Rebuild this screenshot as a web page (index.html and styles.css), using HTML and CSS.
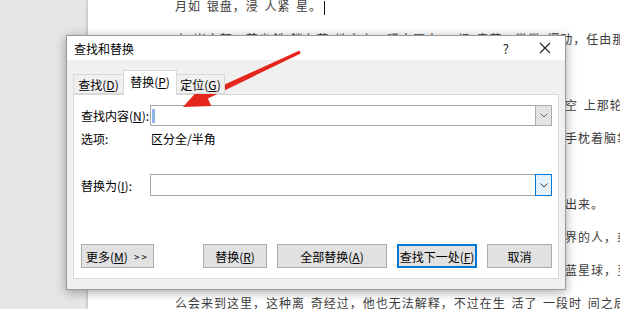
FILE: index.html
```html
<!DOCTYPE html>
<html lang="zh-CN">
<head>
<meta charset="utf-8">
<title>查找和替换</title>
<link rel="stylesheet" href="styles.css">
</head>
<body>
<div class="app">
  <div class="gutter"></div>
  <div class="page">
    <div class="doc">
      <div class="line">月如 银盘，浸 人紧 星。<span class="cursor"></span></div>
      <div class="line">山 岗之颠，萧尘斜 躺在草 地之上，嘴中叼中一 根 青草，微微 摆动，任由那</div>
      <div class="line"></div>
      <div class="line">他静静地望着头顶那浩瀚无垠的璀璨星河，目光最后缓缓停留在了夜空 上那轮明月</div>
      <div class="line">思绪翻涌之间，他不由得轻轻叹了一口气，随后便缓缓地平躺下，双手枕着脑袋</div>
      <div class="line"></div>
      <div class="line">那些深深埋藏在心底最深处的久远记忆，此刻又再一点一点地浮现了出来。</div>
      <div class="line">他原本其实不是这个世界之中土生土长的人，而是来自于另外一个世界的人，或</div>
      <div class="line">者说他原本一直生活在一颗名为地球的星球之上，那是一颗美丽的蔚蓝星球，至</div>
      <div class="line">么会来到这里，这种离 奇经过，他也无法解释，不过在生 活了 一段时 间之后</div>
    </div>
  </div>
</div>

<div class="dialog">
  <div class="titlebar">
    <span class="title">查找和替换</span>
    <span class="help">?</span>
    <svg class="close" width="12" height="12" viewBox="0 0 12 12"><path d="M1 1 L11 11 M11 1 L1 11" stroke="#222" stroke-width="1.1" fill="none"/></svg>
  </div>
  <div class="body">
    <div class="tabs">
      <div class="tab tab-find">查找(<u>D</u>)</div>
      <div class="tab tab-rep active">替换(<u>P</u>)</div>
      <div class="tab tab-goto">定位(<u>G</u>)</div>
    </div>
    <div class="panel">
      <div class="row row-find">
        <span class="label">查找内容(<u>N</u>):</span>
        <div class="combo">
          <div class="field"><span class="caret"></span></div>
          <div class="drop"><svg width="8" height="5" viewBox="0 0 8 5"><path d="M0.5 0.5 L4 4 L7.5 0.5" stroke="#666" fill="none"/></svg></div>
        </div>
      </div>
      <div class="row row-opt">
        <span class="label">选项:</span>
        <span class="value">区分全/半角</span>
      </div>
      <div class="row row-rep">
        <span class="label">替换为(<u>I</u>):</span>
        <div class="combo combo-rep">
          <div class="field"></div>
          <div class="drop drop-focus"><svg width="8" height="5" viewBox="0 0 8 5"><path d="M0.5 0.5 L4 4 L7.5 0.5" stroke="#333" fill="none"/></svg></div>
        </div>
      </div>
      <div class="buttons">
        <div class="btn btn-more">更多(<u>M</u>) <span class="gt">&gt;&gt;</span></div>
        <div class="btn btn-rep">替换(<u>R</u>)</div>
        <div class="btn btn-all">全部替换(<u>A</u>)</div>
        <div class="btn btn-next">查找下一处(<u>F</u>)</div>
        <div class="btn btn-cancel">取消</div>
      </div>
    </div>
  </div>
</div>

<svg class="arrow" width="620" height="309" viewBox="0 0 620 309">
  <polygon fill="#e5261c" points="300.6,53.4 299.4,50.6 205.3,93.2 201.9,85.9 183,107 211.3,105.9 207.9,98.6"/>
</svg>
</body>
</html>
```

FILE: styles.css
```css
html, body {
  margin: 0;
  padding: 0;
}
body {
  width: 620px;
  height: 309px;
  overflow: hidden;
  position: relative;
  font-family: "Noto Sans CJK SC", "Noto Sans", sans-serif;
}
.app {
  display: flex;
  height: 309px;
}
.gutter {
  width: 88px;
  background: #e6e6e6;
  flex: none;
}
.page {
  flex: 1;
  background: #fff;
  box-shadow: -1px 0 3px rgba(0,0,0,0.18);
  padding-left: 87px;
  overflow: hidden;
}
.doc {
  margin-top: -11px;
  color: #3c3c3c;
  font-size: 12px;
  letter-spacing: 1px;
  word-spacing: 2px;
  white-space: nowrap;
}
.line {
  height: 33px;
  line-height: 33px;
}
.cursor {
  display: inline-block;
  width: 1px;
  height: 14px;
  background: #111;
  vertical-align: middle;
  margin-left: 2px;
}

.dialog {
  position: absolute;
  left: 66px;
  top: 35px;
  width: 500px;
  height: 255px;
  box-sizing: border-box;
  border: 1px solid #9a9a9a;
  background: #f0f0f0;
  box-shadow: 0 2px 10px rgba(0,0,0,0.35);
  display: flex;
  flex-direction: column;
  font-size: 12px;
  color: #000;
}
.titlebar {
  height: 25px;
  background: #fff;
  display: flex;
  align-items: center;
  padding: 0 14px 0 7px;
}
.title {
  flex: 1;
}
.help {
  font-size: 13px;
  margin-right: 30px;
  color: #222;
}
.close {
  display: block;
}
.body {
  flex: 1;
  padding: 10px 6px 10px 6px;
  display: flex;
  flex-direction: column;
}
.tabs {
  display: flex;
  align-items: flex-end;
  height: 24px;
  position: relative;
  z-index: 1;
}
.tab {
  height: 20px;
  line-height: 19px;
  box-sizing: border-box;
  border: 1px solid #d9d9d9;
  background: #f0f0f0;
  text-align: center;
  white-space: nowrap;
}
.tab-find {
  width: 50px;
  border-right: none;
}
.tab-goto {
  width: 48px;
  border-left: none;
}
.tab.active {
  width: 54px;
  height: 25px;
  line-height: 22px;
  background: #fff;
  border-bottom: none;
  margin-bottom: -1px;
}
.panel {
  flex: 1;
  background: #fff;
  border: 1px solid #d9d9d9;
  padding: 10px 6px 10px 7px;
  display: flex;
  flex-direction: column;
}
.row {
  display: flex;
  align-items: center;
}
.label {
  width: 69px;
  flex: none;
}
.row-find {
  height: 21px;
}
.row-opt {
  height: 16px;
  margin-top: 4px;
}
.value {
  padding-left: 1px;
}
.row-rep {
  height: 22px;
  margin-top: 28px;
}
.combo {
  flex: 1;
  align-self: stretch;
  display: flex;
  box-sizing: border-box;
  border: 1px solid #a6a6a6;
  background: #fff;
}
.field {
  flex: 1;
  display: flex;
  align-items: center;
  padding-left: 1px;
}
.caret {
  width: 3px;
  height: 14px;
  background: #8db7e6;
}
.drop {
  width: 15px;
  margin: -1px -1px -1px 0;
  border: 1px solid #adadad;
  background: #e3e3e3;
  display: flex;
  align-items: center;
  justify-content: center;
}
.drop-focus {
  border-color: #0078d7;
  background: #e5f1fb;
}
.buttons {
  display: flex;
  gap: 10px;
  margin-top: 48px;
  height: 24px;
}
.btn {
  height: 24px;
  box-sizing: border-box;
  border: 1px solid #adadad;
  background: #e1e1e1;
  display: flex;
  align-items: center;
  justify-content: center;
  white-space: nowrap;
}
.btn-more {
  width: 73px;
  margin-right: auto;
}
.gt {
  margin-left: 6px;
  letter-spacing: 2px;
  font-size: 10px;
}
.btn-rep { width: 64px; }
.btn-all { width: 110px; }
.btn-next {
  width: 80px;
  border: 2px solid #0078d7;
}
.btn-cancel { width: 65px; }

.arrow {
  position: absolute;
  left: 0;
  top: 0;
  pointer-events: none;
}
```
